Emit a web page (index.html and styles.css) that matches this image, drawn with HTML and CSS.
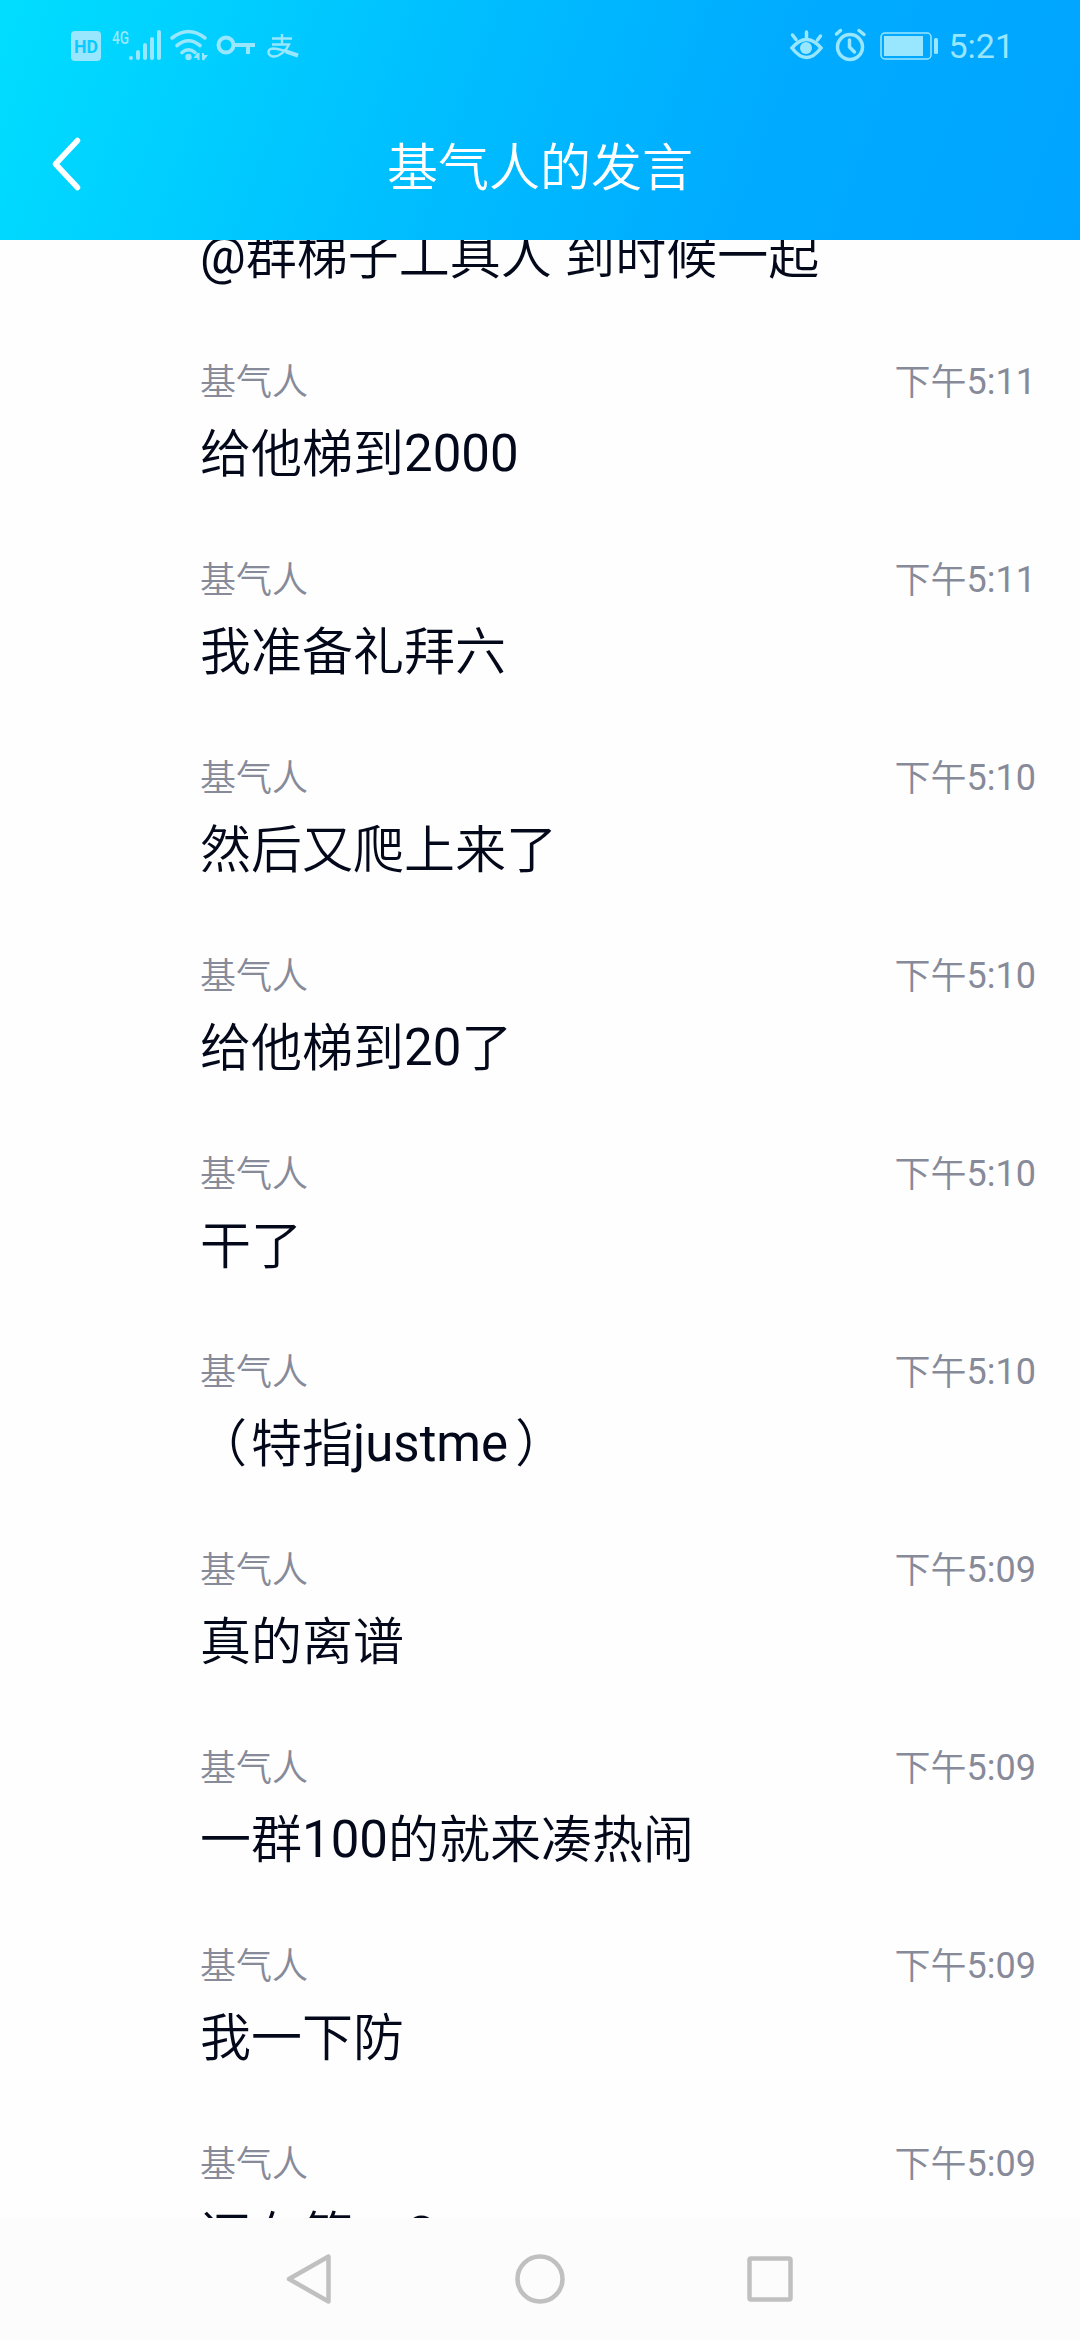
FILE: index.html
```html
<!DOCTYPE html>
<html lang="zh-CN">
<head>
  <meta charset="UTF-8">
  <meta name="viewport" content="width=device-width, initial-scale=1.0">
  <title>基气人的发言</title>
  <link rel="stylesheet" href="styles.css">
</head>
<body>
  <header class="header">
    <div class="status-bar">
      <svg class="status-left" width="240" height="50" viewBox="0 0 240 50">
        <rect x="1" y="11" width="30" height="30" rx="4" fill="currentColor"/>
        <text class="hd" x="4" y="32.500" textLength="24" lengthAdjust="spacingAndGlyphs">HD</text>
        <text class="net" x="42" y="23.500" textLength="17" lengthAdjust="spacingAndGlyphs">4G</text>
        <g stroke="currentColor" stroke-width="4" stroke-linecap="round">
          <path d="M61 38v.1M68 32v6M75 25v13M82 19v19M89 12v26"/>
        </g>
        <g fill="none" stroke="currentColor" stroke-width="3.600" stroke-linecap="round">
          <path d="M102 18Q118.500 5 135 18M107 25.500Q118.500 16 130 25.500M112 32.500Q118.500 27 125 32.500"/>
        </g>
        <circle cx="118.500" cy="37" r="3.200" fill="currentColor"/>
        <path d="M128.500 33v7M128.500 33l-3 4h3M133 33v7M133 40l3-4h-3" fill="none" stroke="currentColor" stroke-width="2"/>
        <g fill="none" stroke="currentColor" stroke-width="4">
          <circle cx="156" cy="25" r="7.500"/>
          <path d="M163 25h22M178 26v8"/>
        </g>
        <g fill="none" stroke="currentColor" stroke-width="2.400">
          <path d="M202 18.500h20M212 14v10M202 24.500h17C216 31 209 37 203 36.500C197 35.500 197 29 203 28.500C211 28.500 219 33 228 35.500"/>
          <path d="M216 31.500l12 4" stroke-width="4"/>
        </g>
      </svg>
      <div class="status-right">
        <svg width="150" height="50" viewBox="0 0 150 50">
          <g fill="none" stroke="currentColor" stroke-width="3.500" stroke-linecap="round">
            <path d="M3 28Q17.500 11 32 28Q17.500 47 3 28zM3.500 15l3.500 4.500M17.500 12v6M31.500 16l-3 4"/>
            <circle cx="61" cy="27" r="12.500"/>
            <path d="M60.500 20v7l5 5M47.500 14l4-3.500M70 10.500l5 4"/>
          </g>
          <circle cx="17" cy="28" r="6" fill="currentColor"/>
          <rect x="92" y="13" width="50" height="26" rx="4" fill="none" stroke="currentColor" stroke-width="1.500"/>
          <rect x="95" y="16" width="39" height="20" fill="currentColor"/>
          <rect x="145" y="18" width="4" height="16" rx="1.500" fill="currentColor"/>
        </svg>
        <span class="clock">5:21</span>
      </div>
    </div>
    <div class="title-bar">
      <svg class="back" width="30" height="56" viewBox="0 0 30 56">
        <path d="M26.500 4.500L4.500 28L26.500 51.500" fill="none" stroke="#fff" stroke-width="5.500" stroke-linecap="round" stroke-linejoin="round"/>
      </svg>
      <h1>基气人的发言</h1>
    </div>
  </header>

  <main class="messages">
    <div class="message">
      <div class="info"><span>基气人</span><span>下午<b>5:11</b></span></div>
      <p><b>@</b>群梯子工具人 到时候一起</p>
    </div>
    <div class="message">
      <div class="info"><span>基气人</span><span>下午<b>5:11</b></span></div>
      <p>给他梯到<b>2000</b></p>
    </div>
    <div class="message">
      <div class="info"><span>基气人</span><span>下午<b>5:11</b></span></div>
      <p>我准备礼拜六</p>
    </div>
    <div class="message">
      <div class="info"><span>基气人</span><span>下午<b>5:10</b></span></div>
      <p>然后又爬上来了</p>
    </div>
    <div class="message">
      <div class="info"><span>基气人</span><span>下午<b>5:10</b></span></div>
      <p>给他梯到<b>20</b>了</p>
    </div>
    <div class="message">
      <div class="info"><span>基气人</span><span>下午<b>5:10</b></span></div>
      <p>干了</p>
    </div>
    <div class="message">
      <div class="info"><span>基气人</span><span>下午<b>5:10</b></span></div>
      <p><span class="paren-open">（</span>特指<b>justme</b><span class="paren-close">）</span></p>
    </div>
    <div class="message">
      <div class="info"><span>基气人</span><span>下午<b>5:09</b></span></div>
      <p>真的离谱</p>
    </div>
    <div class="message">
      <div class="info"><span>基气人</span><span>下午<b>5:09</b></span></div>
      <p>一群<b>100</b>的就来凑热闹</p>
    </div>
    <div class="message">
      <div class="info"><span>基气人</span><span>下午<b>5:09</b></span></div>
      <p>我一下防</p>
    </div>
    <div class="message">
      <div class="info"><span>基气人</span><span>下午<b>5:09</b></span></div>
      <p>还在第一<b>Q</b></p>
    </div>
  </main>

  <nav class="nav-bar">
    <svg width="50" height="50" viewBox="0 0 50 50"><path d="M43.500 2.500v45L4 25z"/></svg>
    <svg width="50" height="50" viewBox="0 0 50 50"><circle cx="25" cy="25" r="22.500"/></svg>
    <svg width="50" height="50" viewBox="0 0 50 50"><rect x="4.500" y="4.500" width="41" height="41" rx="1.500"/></svg>
  </nav>
</body>
</html>
```
FILE: styles.css
```css
* {
  box-sizing: border-box;
}

body {
  margin: 0;
  height: 2340px;
  display: flex;
  flex-direction: column;
  overflow: hidden;
  background: #fefefe;
  font-family: Roboto, "Noto Sans CJK SC", sans-serif;
}

/* top gradient */
.header {
  height: 240px;
  flex: none;
  background: linear-gradient(110deg, #00deff 0%, #00c0ff 38%, #00acff 68%, #00a4ff 100%);
  color: #fff;
}

.status-bar {
  height: 90px;
  padding: 20px 66px 0 70px;
  display: flex;
  justify-content: space-between;
  color: #99e6ff;
}

.hd {
  font-size: 19px;
  font-weight: 700;
  fill: #08ccff;
}

.net {
  font-size: 19px;
  font-weight: 500;
  fill: currentColor;
}

.status-right {
  display: flex;
  gap: 9px;
}

.clock {
  font-size: 34px;
  font-weight: 400;
  line-height: 53px;
}

.title-bar {
  height: 150px;
  display: grid;
  grid-template-columns: 110px 1fr 110px;
}

.back {
  margin: 46px 0 0 51px;
}

h1 {
  margin: 0;
  font-size: 51px;
  font-weight: 350;
  line-height: 76px;
  padding-top: 41px;
  text-align: center;
}

.messages {
  height: 1978px;
  flex: none;
  overflow: hidden;
  padding: 0 44px 0 200px;
  font-weight: 350;
}

/* latin letters and digits are a bit heavier than the hanzi */
.messages b {
  font-weight: 400;
  vertical-align: 1px;
  line-height: 1;
}

/* the list is scrolled part way through the first message */
.message:first-child {
  margin-top: -84px;
}

.message {
  height: 198px;
  padding-top: 4px;
}

.info {
  display: flex;
  justify-content: space-between;
  font-size: 36px;
  line-height: 50px;
  color: #878a99;
}

.message p {
  margin: 9px 0 0;
  font-size: 51px;
  line-height: 76px;
  white-space: nowrap;
  color: #03081a;
}

.paren-open {
  margin: 0 4px 0 -4px;
}

.paren-close {
  margin-left: 7px;
}

.nav-bar {
  height: 122px;
  flex: none;
  display: flex;
  justify-content: center;
  gap: 180px;
  padding-top: 36px;
  background: #fcfcfc;
}

.nav-bar svg {
  fill: none;
  stroke: #c0c0c0;
  stroke-width: 4.500;
  stroke-linejoin: round;
}
```
